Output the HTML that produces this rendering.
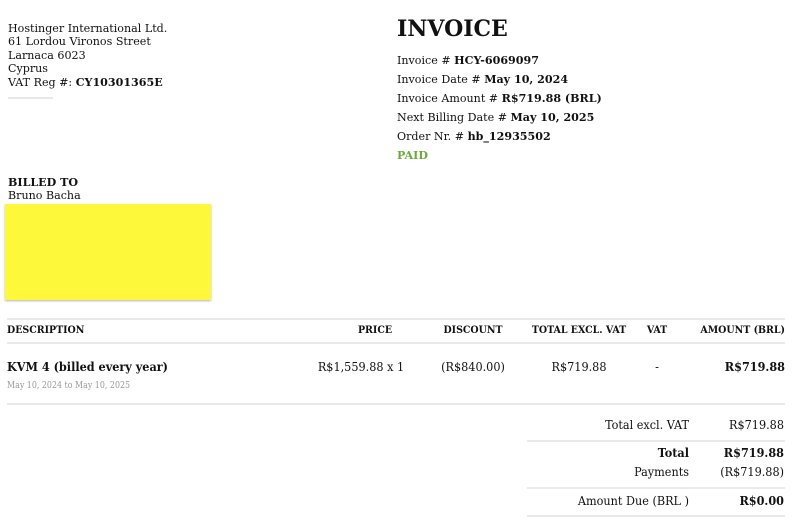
<!DOCTYPE html>
<html><head><meta charset="utf-8"><style>
html,body{margin:0;padding:0;background:#fff;width:800px;height:529px;overflow:hidden}
body{position:relative;font-family:"DejaVu Serif","Liberation Serif",serif;color:#111}
.a{position:absolute;white-space:nowrap;line-height:1}
.c{font-family:"DejaVu Serif Condensed","DejaVu Serif",serif;font-stretch:condensed}
.m{transform:translateX(-50%)}
.r{transform:translateX(-100%)}
.t{font-size:11.1px}
.h{font-size:10.5px;font-weight:bold}
.v{font-size:12.5px}
.ln{position:absolute;height:2px;background:#e9e9e9}
b{font-weight:bold}
</style></head><body>
<div class="a t" style="left:8px;top:23px">Hostinger International Ltd.</div>
<div class="a t" style="left:8px;top:36px">61 Lordou Vironos Street</div>
<div class="a t" style="left:8px;top:50px">Larnaca 6023</div>
<div class="a t" style="left:8px;top:63px">Cyprus</div>
<div class="a t" style="left:8px;top:77px">VAT Reg #: <b>CY10301365E</b></div>
<div class="ln" style="left:8px;top:97px;width:45px"></div>

<div class="a" style="left:397px;top:18px;font-size:22px;font-weight:bold">INVOICE</div>
<div class="a t" style="left:397px;top:55px">Invoice # <b>HCY-6069097</b></div>
<div class="a t" style="left:397px;top:74px">Invoice Date # <b>May 10, 2024</b></div>
<div class="a t" style="left:397px;top:93px">Invoice Amount # <b>R$719.88 (BRL)</b></div>
<div class="a t" style="left:397px;top:112px">Next Billing Date # <b>May 10, 2025</b></div>
<div class="a t" style="left:397px;top:131px">Order Nr. # <b>hb_12935502</b></div>
<div class="a t" style="left:397px;top:150px;color:#6aab3c;font-weight:bold">PAID</div>

<div class="a t" style="left:8px;top:177px;font-weight:bold">BILLED TO</div>
<div class="a t" style="left:8px;top:190px">Bruno Bacha</div>
<div style="position:absolute;left:5px;top:204px;width:206px;height:96px;background:#fdf93a;box-shadow:0 1px 2px rgba(0,0,0,.3)"></div>

<div class="ln" style="left:7px;top:318px;width:778px"></div>
<div class="a c h" style="left:7px;top:325px">DESCRIPTION</div>
<div class="a c h m" style="left:375px;top:325px">PRICE</div>
<div class="a c h m" style="left:473px;top:325px">DISCOUNT</div>
<div class="a c h m" style="left:579px;top:325px">TOTAL EXCL. VAT</div>
<div class="a c h m" style="left:657px;top:325px">VAT</div>
<div class="a c h r" style="left:785px;top:325px">AMOUNT (BRL)</div>
<div class="ln" style="left:7px;top:342px;width:778px"></div>

<div class="a c v" style="left:7px;top:361px;font-weight:bold">KVM 4 (billed every year)</div>
<div class="a c" style="left:7px;top:382px;font-size:8.8px;color:#999">May 10, 2024 to May 10, 2025</div>
<div class="a c v m" style="left:361px;top:361px">R$1,559.88 x 1</div>
<div class="a c v m" style="left:473px;top:361px">(R$840.00)</div>
<div class="a c v m" style="left:579px;top:361px">R$719.88</div>
<div class="a c v m" style="left:657px;top:361px">-</div>
<div class="a c v r" style="left:785px;top:361px;font-weight:bold">R$719.88</div>
<div class="ln" style="left:7px;top:403px;width:778px"></div>

<div class="a c v r" style="left:689px;top:419px">Total excl. VAT</div>
<div class="a c v r" style="left:784px;top:419px">R$719.88</div>
<div class="ln" style="left:527px;top:440px;width:258px"></div>
<div class="a c v r" style="left:689px;top:447px;font-weight:bold">Total</div>
<div class="a c v r" style="left:784px;top:447px;font-weight:bold">R$719.88</div>
<div class="a c v r" style="left:689px;top:466px">Payments</div>
<div class="a c v r" style="left:784px;top:466px">(R$719.88)</div>
<div class="ln" style="left:527px;top:487px;width:258px"></div>
<div class="a c v r" style="left:689px;top:495px">Amount Due (BRL )</div>
<div class="a c v r" style="left:784px;top:495px;font-weight:bold">R$0.00</div>
<div class="ln" style="left:527px;top:515px;width:258px"></div>
</body></html>
